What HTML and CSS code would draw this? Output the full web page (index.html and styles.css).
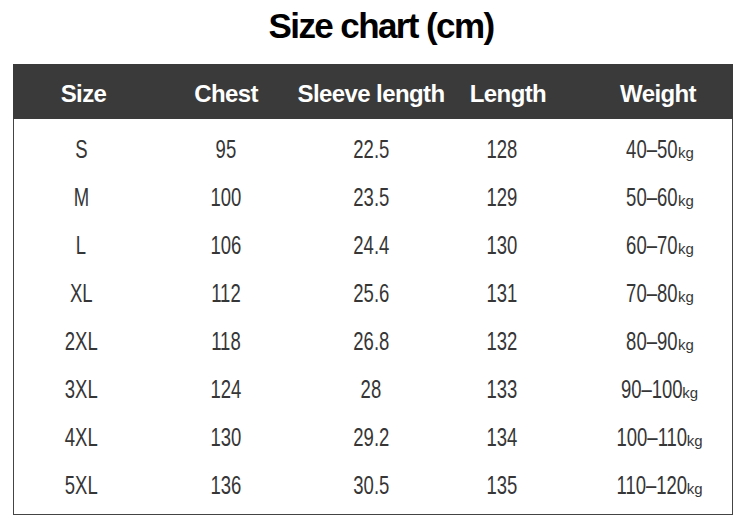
FILE: index.html
```html
<!DOCTYPE html>
<html>
<head>
<meta charset="utf-8">
<link rel="stylesheet" href="styles.css">
</head>
<body>
<div class="page">
  <h1 class="title">Size chart (cm)</h1>
  <div class="chart">
    <div class="row head">
      <div class="c c1">Size</div><div class="c c2">Chest</div><div class="c c3">Sleeve length</div><div class="c c4">Length</div><div class="c c5">Weight</div>
    </div>
    <div class="body">
      <div class="row"><div class="c c1"><span class="v">S</span></div><div class="c c2"><span class="v">95</span></div><div class="c c3"><span class="v">22.5</span></div><div class="c c4"><span class="v">128</span></div><div class="c c5"><span class="v">40–50<span class="kg">kg</span></span></div></div>
      <div class="row"><div class="c c1"><span class="v">M</span></div><div class="c c2"><span class="v">100</span></div><div class="c c3"><span class="v">23.5</span></div><div class="c c4"><span class="v">129</span></div><div class="c c5"><span class="v">50–60<span class="kg">kg</span></span></div></div>
      <div class="row"><div class="c c1"><span class="v">L</span></div><div class="c c2"><span class="v">106</span></div><div class="c c3"><span class="v">24.4</span></div><div class="c c4"><span class="v">130</span></div><div class="c c5"><span class="v">60–70<span class="kg">kg</span></span></div></div>
      <div class="row"><div class="c c1"><span class="v">XL</span></div><div class="c c2"><span class="v">112</span></div><div class="c c3"><span class="v">25.6</span></div><div class="c c4"><span class="v">131</span></div><div class="c c5"><span class="v">70–80<span class="kg">kg</span></span></div></div>
      <div class="row"><div class="c c1"><span class="v">2XL</span></div><div class="c c2"><span class="v">118</span></div><div class="c c3"><span class="v">26.8</span></div><div class="c c4"><span class="v">132</span></div><div class="c c5"><span class="v">80–90<span class="kg">kg</span></span></div></div>
      <div class="row"><div class="c c1"><span class="v">3XL</span></div><div class="c c2"><span class="v">124</span></div><div class="c c3"><span class="v">28</span></div><div class="c c4"><span class="v">133</span></div><div class="c c5"><span class="v">90–100<span class="kg">kg</span></span></div></div>
      <div class="row"><div class="c c1"><span class="v">4XL</span></div><div class="c c2"><span class="v">130</span></div><div class="c c3"><span class="v">29.2</span></div><div class="c c4"><span class="v">134</span></div><div class="c c5"><span class="v">100–110<span class="kg">kg</span></span></div></div>
      <div class="row"><div class="c c1"><span class="v">5XL</span></div><div class="c c2"><span class="v">136</span></div><div class="c c3"><span class="v">30.5</span></div><div class="c c4"><span class="v">135</span></div><div class="c c5"><span class="v">110–120<span class="kg">kg</span></span></div></div>
    </div>
  </div>
</div>
</body>
</html>
```
FILE: styles.css
```css
html, body {
  margin: 0;
  padding: 0;
  background: #fff;
}
.page {
  width: 750px;
  height: 524px;
  padding-top: 4px;
  box-sizing: border-box;
}
.title {
  margin: 0;
  height: 60px;
  line-height: 44px;
  text-align: center;
  font-family: "Liberation Sans", Arial, sans-serif;
  font-weight: bold;
  font-size: 35px;
  letter-spacing: -1.6px;
  color: #000;
  padding-left: 12px;
}
.chart {
  margin-left: 13px;
  width: 720px;
  border: 1px solid #444;
  border-top: none;
  box-sizing: border-box;
}
.row {
  display: grid;
  grid-template-columns: 134px 156px 134px 134px 160px;
  height: 48px;
  align-items: center;
}
.head {
  height: 55px;
  background: #3a3a3a;
  color: #fff;
  font-family: "Liberation Sans", Arial, sans-serif;
  font-weight: bold;
  font-size: 24px;
  letter-spacing: -0.6px;
  margin: 0 -1px;
  padding: 4px 1px 0;
  box-sizing: border-box;
}
.head .c1 {
  padding-left: 5px;
}
.head .c4 {
  padding-left: 6px;
}
.body {
  padding: 6px 0 5px;
  font-family: "Liberation Sans", Arial, sans-serif;
  font-size: 25px;
  color: #363636;
}
.body .c4 {
  padding-right: 6px;
}
.c {
  display: flex;
  justify-content: center;
  align-items: center;
  white-space: nowrap;
  min-width: 0;
}
.c5 {
  padding-left: 12px;
}
.v {
  display: inline-block;
  transform: scaleX(0.74);
  transform-origin: center;
}
.kg {
  display: inline-block;
  font-size: 15px;
  transform: scaleX(1.35);
  transform-origin: left;
}
```
